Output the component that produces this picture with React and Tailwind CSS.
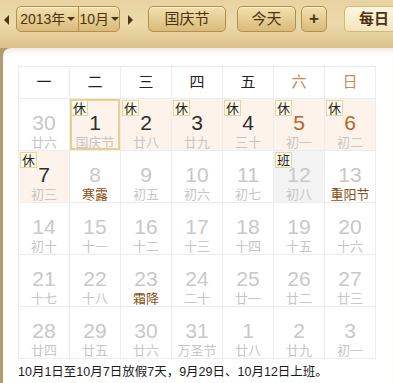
import React from "react";

const FONT = { fontFamily: '"Liberation Sans", "Noto Sans CJK SC", sans-serif' };

const WEEK = ["一", "二", "三", "四", "五", "六", "日"];

// rest = 休, work = 班, fest = 节气/节日 in brown
const ROWS = [
  [
    { d: 30, l: "廿六" },
    { d: 1, l: "国庆节", rest: true, dark: true, sel: true },
    { d: 2, l: "廿八", rest: true, dark: true },
    { d: 3, l: "廿九", rest: true, dark: true },
    { d: 4, l: "三十", rest: true, dark: true },
    { d: 5, l: "初一", rest: true, orange: true },
    { d: 6, l: "初二", rest: true, orange: true },
  ],
  [
    { d: 7, l: "初三", rest: true, dark: true },
    { d: 8, l: "寒露", fest: true },
    { d: 9, l: "初五" },
    { d: 10, l: "初六" },
    { d: 11, l: "初七" },
    { d: 12, l: "初八", work: true },
    { d: 13, l: "重阳节", fest: true },
  ],
  [
    { d: 14, l: "初十" },
    { d: 15, l: "十一" },
    { d: 16, l: "十二" },
    { d: 17, l: "十三" },
    { d: 18, l: "十四" },
    { d: 19, l: "十五" },
    { d: 20, l: "十六" },
  ],
  [
    { d: 21, l: "十七" },
    { d: 22, l: "十八" },
    { d: 23, l: "霜降", fest: true },
    { d: 24, l: "二十" },
    { d: 25, l: "廿一" },
    { d: 26, l: "廿二" },
    { d: 27, l: "廿三" },
  ],
  [
    { d: 28, l: "廿四" },
    { d: 29, l: "廿五" },
    { d: 30, l: "廿六" },
    { d: 31, l: "万圣节" },
    { d: 1, l: "廿八" },
    { d: 2, l: "廿九" },
    { d: 3, l: "初一" },
  ],
];

function GoldButton({ children, className = "" }) {
  return (
    <div
      className={`h-[26px] flex items-center justify-center whitespace-nowrap rounded-[5px] border border-[#b58d4c] bg-gradient-to-b from-[#f2e0ae] to-[#d9bb7a] text-[#4d3312] shadow-[inset_0_1px_0_#fbf0cf] ${className}`}
    >
      {children}
    </div>
  );
}

function Caret() {
  return <span className="ml-[2px] inline-block w-0 h-0 border-l-[4px] border-r-[4px] border-t-[4px] border-l-transparent border-r-transparent border-t-[#4d3312]" />;
}

function Cell({ c }) {
  let bg = "bg-white";
  if (c.rest) bg = "bg-[#fdf3ea]";
  if (c.work) bg = "bg-[#f3f3f3]";
  let numColor = "text-[#c8c8c8]";
  if (c.dark) numColor = "text-[#2e2e2e]";
  if (c.orange) numColor = "text-[#b8632c]";
  const lunarColor = c.fest ? "text-[#8a4f12]" : "text-[#c6c6c6]";
  return (
    <div className={`relative h-[52px] border-r border-b border-[#ececec] ${bg}`}>
      {c.sel && <div className="absolute inset-0 border-2 border-[#e6d08e]" />}
      {(c.rest || c.work) && (
        <div className="absolute left-[1px] top-[1px] h-[16px] px-[1px] flex items-center text-[13px] leading-none text-[#222] bg-[#fffbea] border border-[#e3d6a6]">
          {c.rest ? "休" : "班"}
        </div>
      )}
      <div className={`pt-[12px] text-center text-[21px] leading-[24px] ${numColor}`}>{c.d}</div>
      <div className={`text-center text-[13px] leading-[16px] ${lunarColor}`}>{c.l}</div>
    </div>
  );
}

export default function App() {
  return (
    <div style={FONT} className="w-[393px] h-[383px] overflow-hidden bg-[#b29b6e] flex flex-col">
      {/* Top bar */}
      <div className="h-[48px] shrink-0 bg-gradient-to-b from-[#e9d3a0] via-[#ecdaab] to-[#dcc28a] flex items-start pt-[6px] text-[14px]">
        <span className="mt-[9px] ml-[4px] w-0 h-0 border-t-[5px] border-b-[5px] border-r-[5px] border-t-transparent border-b-transparent border-r-[#4d3312]" />
        <GoldButton className="ml-[7px] w-[104px] !justify-start">
          <div className="w-[64px] h-full flex items-center justify-center border-r border-[#b58d4c] text-[14px]">
            2013年<Caret />
          </div>
          <div className="flex-1 flex items-center justify-center text-[14px]">
            10月<Caret />
          </div>
        </GoldButton>
        <span className="mt-[9px] ml-[8px] w-0 h-0 border-t-[5px] border-b-[5px] border-l-[5px] border-t-transparent border-b-transparent border-l-[#4d3312]" />
        <GoldButton className="ml-[15px] w-[78px] text-[15px]">国庆节</GoldButton>
        <GoldButton className="ml-[11px] w-[59px] text-[15px]">今天</GoldButton>
        <GoldButton className="ml-[5px] w-[26px] text-[17px] font-bold">+</GoldButton>
        <div className="ml-[17px] flex-1 h-[26px] flex items-center pl-[14px] rounded-l-[5px] border border-r-0 border-[#d4b77a] bg-gradient-to-b from-[#fdf6e0] to-[#f3e4bb] text-[15px] font-bold text-[#4d3312]">
          每日
        </div>
      </div>

      {/* Panel */}
      <div className="flex-1 ml-[3px] bg-white rounded-tl-[8px] shadow-[inset_0_6px_6px_-4px_rgba(120,90,40,0.15)] pt-[18px] pl-[15px]">
        <div className="w-[358px] border-l border-t border-[#ececec]">
          <div className="grid grid-cols-7">
            {WEEK.map((w, i) => (
              <div
                key={w}
                className={`h-[32px] flex items-center justify-center border-r border-b border-[#ececec] text-[15px] ${i >= 5 ? "text-[#c58a55]" : "text-[#222]"}`}
              >
                {w}
              </div>
            ))}
          </div>
          {ROWS.map((row, ri) => (
            <div key={ri} className="grid grid-cols-7">
              {row.map((c, ci) => (
                <Cell key={ci} c={c} />
              ))}
            </div>
          ))}
        </div>
        <div className="mt-[5px] text-[12.5px] leading-[16px] text-[#1a1a1a]">
          10月1日至10月7日放假7天，9月29日、10月12日上班。
        </div>
      </div>
    </div>
  );
}
